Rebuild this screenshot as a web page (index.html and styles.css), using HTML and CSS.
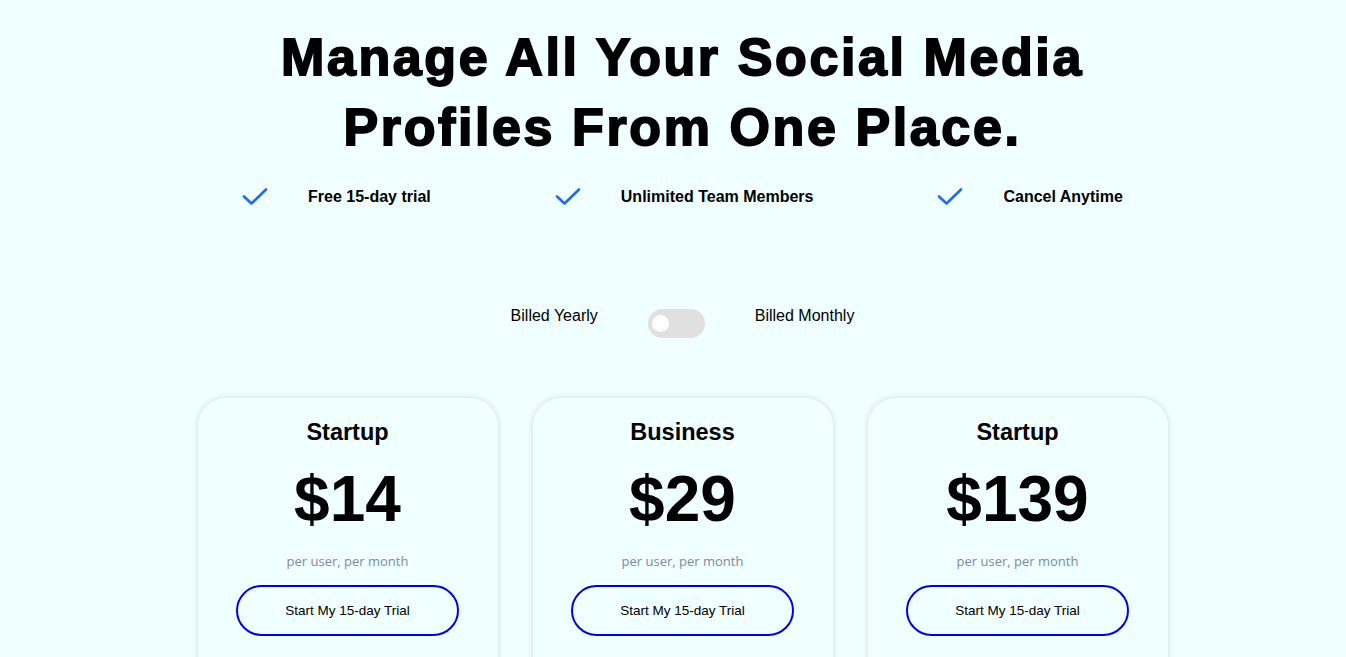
FILE: index.html
```html
<!DOCTYPE html>
<html>
<head>
<meta charset="utf-8">
<link rel="stylesheet" href="styles.css">
</head>
<body>
<main class="page">
  <h1 class="title">Manage All Your Social Media<br>Profiles From One Place.</h1>
  <ul class="features">
    <li class="feature">
      <svg class="check" viewBox="0 0 26 20" width="26" height="20"><path d="M2 9.5l7.5 7L24 2.5" fill="none" stroke="#1f6bef" stroke-width="2.6" stroke-linecap="round" stroke-linejoin="round"/></svg>
      <span>Free 15-day trial</span>
    </li>
    <li class="feature">
      <svg class="check" viewBox="0 0 26 20" width="26" height="20"><path d="M2 9.5l7.5 7L24 2.5" fill="none" stroke="#1f6bef" stroke-width="2.6" stroke-linecap="round" stroke-linejoin="round"/></svg>
      <span>Unlimited Team Members</span>
    </li>
    <li class="feature">
      <svg class="check" viewBox="0 0 26 20" width="26" height="20"><path d="M2 9.5l7.5 7L24 2.5" fill="none" stroke="#1f6bef" stroke-width="2.6" stroke-linecap="round" stroke-linejoin="round"/></svg>
      <span>Cancel Anytime</span>
    </li>
  </ul>
  <div class="billing">
    <span>Billed Yearly</span>
    <span class="toggle"><span class="knob"></span></span>
    <span>Billed Monthly</span>
  </div>
  <div class="cards">
    <section class="card">
      <h2 class="plan">Startup</h2>
      <div class="price">$14</div>
      <p class="per">per user, per month</p>
      <button class="cta">Start My 15-day Trial</button>
    </section>
    <section class="card">
      <h2 class="plan">Business</h2>
      <div class="price">$29</div>
      <p class="per">per user, per month</p>
      <button class="cta">Start My 15-day Trial</button>
    </section>
    <section class="card">
      <h2 class="plan">Startup</h2>
      <div class="price">$139</div>
      <p class="per">per user, per month</p>
      <button class="cta">Start My 15-day Trial</button>
    </section>
  </div>
</main>
</body>
</html>
```

FILE: styles.css
```css
html, body {
  margin: 0;
  padding: 0;
  background: #f0ffff;
  font-family: "Liberation Sans", Arial, sans-serif;
  color: #000;
  overflow: hidden;
}
.page {
  width: 1346px;
  height: 657px;
  box-sizing: border-box;
  padding-left: 19px;
  display: flex;
  flex-direction: column;
  align-items: center;
  overflow: hidden;
}
.title {
  margin: 22px 0 0;
  font-size: 52px;
  line-height: 70px;
  font-weight: 900;
  letter-spacing: 2.6px;
  text-align: center;
  -webkit-text-stroke: 1.8px #000;
}
.features {
  list-style: none;
  margin: 23px 0 0;
  padding: 0;
  display: flex;
  gap: 124px;
}
.feature {
  display: flex;
  align-items: center;
  gap: 40px;
  font-size: 16px;
  font-weight: bold;
  height: 24px;
}
.check {
  display: block;
}
.billing {
  margin-top: 92px;
  display: flex;
  align-items: center;
  gap: 50px;
  font-size: 16px;
  height: 30px;
}
.toggle {
  width: 57px;
  height: 29px;
  margin-top: 14px;
  border-radius: 15px;
  background: #e0e0e0;
  display: flex;
  align-items: center;
  padding-left: 4px;
  box-sizing: border-box;
}
.knob {
  width: 17px;
  height: 17px;
  border-radius: 50%;
  background: #fff;
}
.cards {
  margin-top: 67px;
  display: flex;
  gap: 35px;
}
.card {
  width: 300px;
  height: 300px;
  box-sizing: border-box;
  border-radius: 28px;
  background: #f0ffff;
  box-shadow: 0 0 6px rgba(0, 80, 80, 0.18);
  display: flex;
  flex-direction: column;
  align-items: center;
  padding-top: 20px;
}
.plan {
  margin: 0;
  font-size: 23.5px;
  line-height: 28px;
  font-weight: bold;
}
.price {
  margin-top: 18px;
  font-size: 64px;
  line-height: 70px;
  font-weight: bold;
}
.per {
  margin: 18px 0 0;
  font-family: "Open Sans", sans-serif;
  font-size: 13px;
  line-height: 18px;
  color: #7d8b9c;
}
.cta {
  margin-top: 15px;
  width: 223px;
  height: 51px;
  border: 2px solid #0000ee;
  border-radius: 26px;
  background: transparent;
  font-family: "Liberation Sans", Arial, sans-serif;
  font-size: 13.5px;
  color: #000;
  cursor: pointer;
}
```
